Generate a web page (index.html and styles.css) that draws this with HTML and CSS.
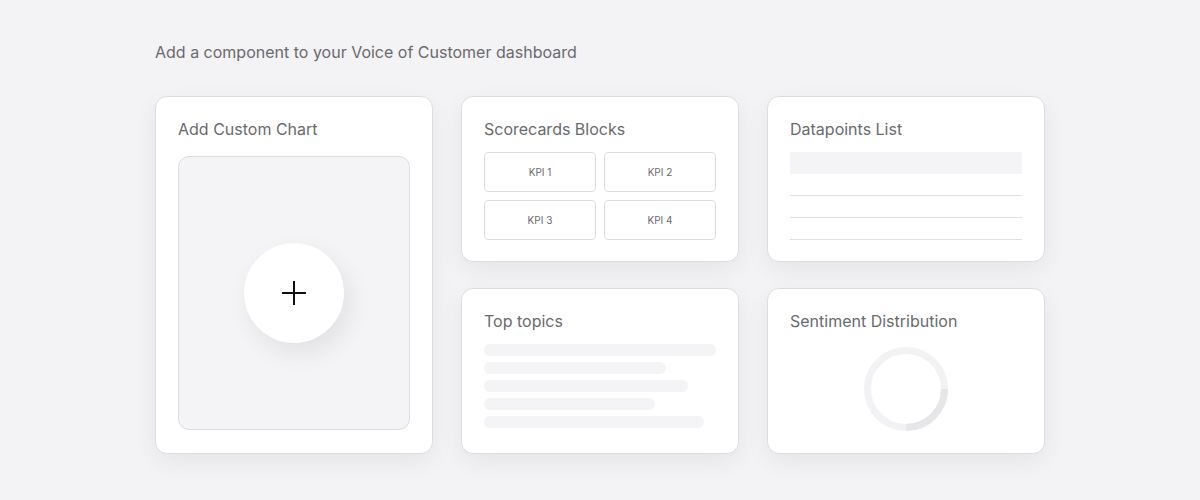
FILE: index.html
```html
<!DOCTYPE html>
<html>
<head>
<meta charset="utf-8">
<link rel="stylesheet" href="styles.css">
</head>
<body>
<div class="page">
  <h1 class="heading">Add a component to your Voice of Customer dashboard</h1>
  <div class="grid">
    <div class="card card-tall">
      <div class="title">Add Custom Chart</div>
      <div class="chart-box">
        <div class="add-btn">
          <svg width="26" height="26" viewBox="0 0 26 26"><path d="M13 1V25M1 13H25" stroke="#111" stroke-width="2" fill="none"/></svg>
        </div>
      </div>
    </div>
    <div class="card">
      <div class="title">Scorecards Blocks</div>
      <div class="kpis">
        <div class="kpi">KPI 1</div>
        <div class="kpi">KPI 2</div>
        <div class="kpi">KPI 3</div>
        <div class="kpi">KPI 4</div>
      </div>
    </div>
    <div class="card">
      <div class="title">Datapoints List</div>
      <div class="dp-head"></div>
      <div class="dp-line"></div>
      <div class="dp-line"></div>
      <div class="dp-line"></div>
    </div>
    <div class="card">
      <div class="title">Top topics</div>
      <div class="bars">
        <div class="bar" style="width:232px"></div>
        <div class="bar" style="width:182px"></div>
        <div class="bar" style="width:204px"></div>
        <div class="bar" style="width:171px"></div>
        <div class="bar" style="width:220px"></div>
      </div>
    </div>
    <div class="card">
      <div class="title">Sentiment Distribution</div>
      <div class="donut-wrap">
        <svg width="86" height="86" viewBox="0 0 86 86">
          <circle cx="43" cy="43" r="38.5" stroke="#f2f1f4" stroke-width="7" fill="none"/>
          <path d="M81.5 43A38.5 38.5 0 0 1 43 81.5" stroke="#e6e5e8" stroke-width="7" fill="none"/>
        </svg>
      </div>
    </div>
  </div>
</div>
</body>
</html>
```
FILE: styles.css
```css
* { box-sizing: border-box; }
html, body { margin: 0; padding: 0; }
body {
  background: #f3f2f5;
  font-family: Inter, "Noto Sans", sans-serif;
  width: 1200px;
  height: 500px;
  overflow: hidden;
}
.page {
  padding: 42px 0 0 155px;
}
.heading {
  margin: 0;
  font-size: 16px;
  line-height: 20px;
  font-weight: 400;
  color: #6a6a6d;
}
.grid {
  margin-top: 34px;
  display: grid;
  grid-template-columns: 278px 278px 278px;
  grid-template-rows: 166px 166px;
  column-gap: 28px;
  row-gap: 26px;
}
.card {
  background: #fff;
  border: 1px solid #dddcdf;
  border-radius: 12px;
  box-shadow: 0 8px 24px rgba(0,0,0,0.06);
  padding: 22px 22px 0 22px;
}
.card-tall {
  grid-row: span 2;
  display: flex;
  flex-direction: column;
  padding-bottom: 23px;
}
.title {
  font-size: 16px;
  line-height: 20px;
  color: #6a6a6d;
}
.chart-box {
  margin-top: 17px;
  flex: 1;
  background: #f4f3f6;
  border: 1px solid #dddcdf;
  border-radius: 11px;
  display: flex;
  align-items: center;
  justify-content: center;
}
.add-btn {
  width: 100px;
  height: 100px;
  border-radius: 50%;
  background: #fff;
  box-shadow: 6px 10px 24px rgba(0,0,0,0.08);
  display: flex;
  align-items: center;
  justify-content: center;
}
.kpis {
  margin-top: 13px;
  display: grid;
  grid-template-columns: 112px 112px;
  grid-auto-rows: 40px;
  column-gap: 8px;
  row-gap: 8px;
}
.kpi {
  border: 1px solid #dddcdf;
  border-radius: 4px;
  display: flex;
  align-items: center;
  justify-content: center;
  font-size: 10px;
  color: #6a6a6d;
}
.dp-head {
  margin-top: 13px;
  width: 232px;
  height: 22px;
  background: #f4f3f6;
}
.dp-line {
  width: 232px;
  height: 22px;
  border-bottom: 1px solid #e0dfe2;
}
.bars {
  margin-top: 13px;
  display: flex;
  flex-direction: column;
  gap: 6px;
}
.bar {
  height: 12px;
  border-radius: 6px;
  background: #f4f3f6;
}
.donut-wrap {
  margin-top: 15px;
  display: flex;
  justify-content: center;
}
```
